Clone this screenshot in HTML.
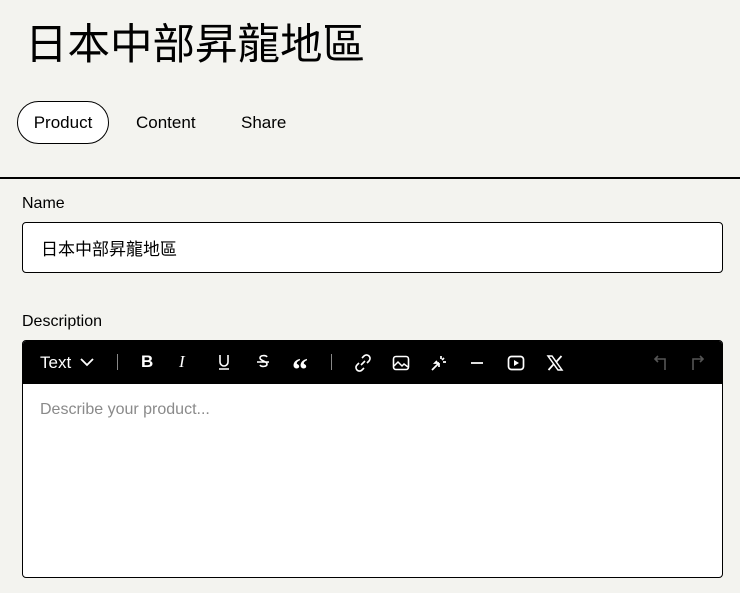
<!DOCTYPE html>
<html><head><meta charset="utf-8"><style>
body{margin:0;width:740px;height:593px;background:#f3f3ef;font-family:"Liberation Sans","Noto Sans CJK TC",sans-serif;color:#000;overflow:hidden;position:relative}
.abs{position:absolute}
h1{position:absolute;left:25px;top:14px;margin:0;font-weight:400;font-size:42.5px;line-height:56px;letter-spacing:0;font-family:"Noto Sans CJK TC",sans-serif}
.pill{left:17px;top:101px;width:90px;height:41px;border:1px solid #000;border-radius:22px;background:#fff;font-size:17px;line-height:41px;text-align:center}
.tab{top:101px;font-size:17px;line-height:43px}
.hr{left:0;top:177px;width:740px;height:1.5px;background:#000}
.lbl{font-size:16px;left:22px}
.input{left:22px;top:222px;border:1px solid #000;border-radius:4px;background:#fff;font-size:17px;line-height:49px;padding-left:18px;box-sizing:border-box;width:701px;height:51px;font-family:"Noto Sans CJK TC",sans-serif}
.ed{left:22px;top:340px;width:701px;height:238px;border:1px solid #000;border-radius:4px;background:#fff;overflow:hidden;box-sizing:border-box}
.tb{position:absolute;left:0;top:0;width:100%;height:43px;background:#000;color:#fff}
.tb svg{position:absolute;top:13px}
.ph{position:absolute;left:17px;top:60px;color:#8a8a8a;font-size:16px}
</style></head><body>
<h1>日本中部昇龍地區</h1>
<div class="abs pill">Product</div>
<div class="abs tab" style="left:136px">Content</div>
<div class="abs tab" style="left:241px">Share</div>
<div class="abs hr"></div>
<div class="abs lbl" style="top:195px">Name</div>
<div class="abs input">日本中部昇龍地區</div>
<div class="abs lbl" style="top:313px">Description</div>
<div class="abs ed">
<div class="tb">
<span style="position:absolute;left:17px;top:12px;font-size:17px">Text</span>
<svg style="left:57px;top:16px" width="14" height="10" viewBox="0 0 14 10"><path d="M1 2l6 6 6-6" stroke="#fff" stroke-width="1.8" fill="none"/></svg>
<div style="position:absolute;left:94px;top:13px;width:1px;height:16px;background:#888"></div>
<span style="position:absolute;left:118px;top:11px;font-weight:700;font-size:17px">B</span>
<span style="position:absolute;left:156px;top:11px;font-style:italic;font-size:17px;font-family:'Liberation Serif',serif">I</span>
<svg style="left:195px" width="12" height="18" viewBox="0 0 12 18"><path d="M2 1v7a4 4 0 008 0V1M1 15h10" stroke="#fff" stroke-width="1.6" fill="none"/></svg>
<svg style="left:233px" width="14" height="18" viewBox="0 0 14 18"><path d="M11 3c-1-2-7-2-7 1s7 3 7 6-6 3-7 1M1 8h12" stroke="#fff" stroke-width="1.6" fill="none"/></svg>
<span style="position:absolute;left:269px;top:12px;font-size:32px;line-height:32px;font-weight:700;font-family:'Liberation Serif',serif">“</span>
<div style="position:absolute;left:308px;top:13px;width:1px;height:16px;background:#888"></div>
<svg style="left:331px" width="18" height="18" viewBox="0 0 18 18"><path d="M8 4l2-2a3.5 3.5 0 015 5l-2 2M10 14l-2 2a3.5 3.5 0 01-5-5l2-2M7 11l4-4" stroke="#fff" stroke-width="1.6" fill="none"/></svg>
<svg style="left:369px" width="18" height="18" viewBox="0 0 18 18"><rect x="1.5" y="2.5" width="15" height="13" rx="2.5" stroke="#fff" stroke-width="1.6" fill="none"/><path d="M2 12l4-4 4 4 2-2 4 3" stroke="#fff" stroke-width="1.5" fill="none"/></svg>
<svg style="left:407px" width="18" height="18" viewBox="0 0 18 18"><path d="M2 16l7-7M9 9l-4 0 2-2M9 9v4M11 2v3M14 4l-2 2M16 8h-3" stroke="#fff" stroke-width="1.7" fill="none"/></svg>
<svg style="left:446px" width="16" height="18" viewBox="0 0 16 18"><path d="M2 9h12" stroke="#fff" stroke-width="1.8"/></svg>
<svg style="left:484px" width="18" height="18" viewBox="0 0 18 18"><rect x="1.5" y="2.5" width="15" height="13" rx="3" stroke="#fff" stroke-width="1.7" fill="none"/><path d="M7 6v6l5-3z" fill="#fff"/></svg>
<svg style="left:523px" width="18" height="18" viewBox="0 0 18 18"><path d="M2 2h4l10 14h-4z" stroke="#fff" stroke-width="1.5" fill="none"/><path d="M15.5 2L10 8.2M2.5 16L8 9.8" stroke="#fff" stroke-width="1.8"/></svg>
<svg style="left:630px" width="18" height="18" viewBox="0 0 18 18"><path d="M5 2L2 5l3 3M2 5h10v11" stroke="#555" stroke-width="1.6" fill="none"/></svg>
<svg style="left:664px" width="18" height="18" viewBox="0 0 18 18"><path d="M13 2l3 3-3 3M16 5H6v11" stroke="#555" stroke-width="1.6" fill="none"/></svg>
</div>
<div class="ph">Describe your product...</div>
</div>
</body></html>
